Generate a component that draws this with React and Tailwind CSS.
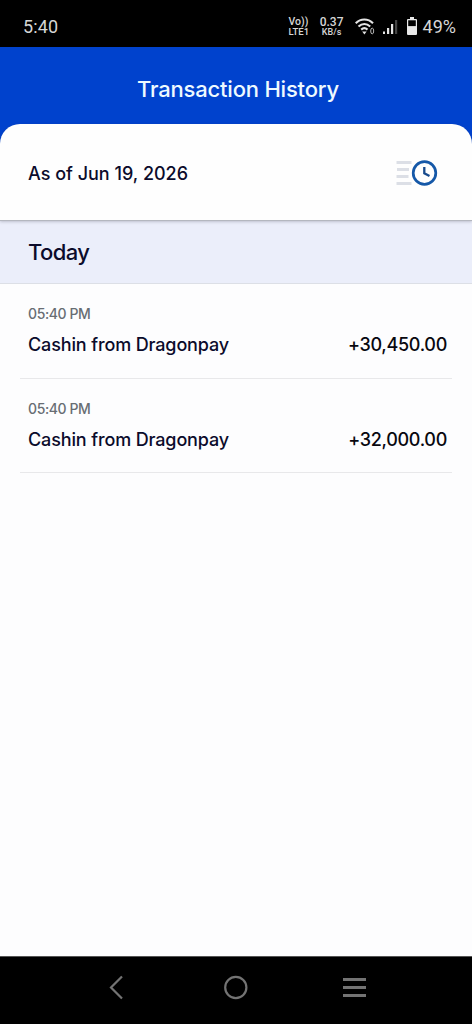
import React from 'react';

const transactions = [
    { id: 1, time: '05:40 PM', title: 'Cashin from Dragonpay', amount: '+30,450.00' },
    { id: 2, time: '05:40 PM', title: 'Cashin from Dragonpay', amount: '+32,000.00' },
];

function StatusBar() {
    return (
        <div className="h-[47px] shrink-0 bg-black text-[#d6d6d6] font-['Roboto',sans-serif] flex items-center pt-[6px] pl-[23px] pr-4">
            <span className="text-[18px] leading-5 tracking-[0.1px]">5:40</span>

            <div className="ml-auto flex items-center">
                <div className="w-[22px] mr-[9px] flex flex-col font-medium leading-[10px] whitespace-nowrap">
                    <span className="text-[10.5px]">Vo))</span>
                    <span className="text-[9.5px]">LTE1</span>
                </div>
                <div className="w-6 mr-[11px] flex flex-col items-center font-medium leading-[10px] whitespace-nowrap">
                    <span className="text-[12px]">0.37</span>
                    <span className="text-[9px]">KB/s</span>
                </div>

                {/* Wifi */}
                <svg className="mr-[8px]" width="20" height="18" viewBox="0 0 20 18" fill="none">
                    <path d="M.7 5.300C5.700 .3 13 .3 18 5.300" stroke="#e4e4e4" strokeWidth="2.100" />
                    <path d="M3.500 8.500C7.100 5.200 11.600 5.200 15.200 8.500" stroke="#e4e4e4" strokeWidth="2.100" />
                    <path d="M6.200 11.600C8 10 10.700 10 12.500 11.600" stroke="#e4e4e4" strokeWidth="2.100" />
                    <path d="M7.200 13.600h4.400L9.400 16.500z" fill="#e4e4e4" />
                    <ellipse cx="17.200" cy="13" rx="1.500" ry="2.900" stroke="#b5b5b5" />
                </svg>

                {/* Signal */}
                <svg className="mr-[9px]" width="15" height="16" viewBox="0 0 15 16">
                    <rect x="0" y="12.500" width="2" height="2.500" fill="#e4e4e4" />
                    <rect x="4" y="9" width="2.200" height="6" fill="#e4e4e4" />
                    <rect x="8" y="5" width="2.200" height="10" fill="#e4e4e4" />
                    <rect x="12" y="1" width="2.200" height="14" fill="#454545" />
                </svg>

                {/* Battery */}
                <svg className="mr-[6px] -mt-[2px]" width="10" height="18" viewBox="0 0 10 18">
                    <path d="M3 0h4v2h2q1 0 1 1v14q0 1-1 1H1q-1 0-1-1V3q0-1 1-1h2z" fill="#e8e8e8" />
                    <rect x="1.200" y="3.300" width="7.600" height="5.800" fill="#000" />
                </svg>
                <span className="text-[18px] leading-5">49%</span>
            </div>
        </div>
    );
}

function HistoryIcon() {
    return (
        <svg className="mt-1" width="42" height="28" viewBox="0 0 42 28" fill="none">
            <path d="M.5 2.500h15M1 9.500h12M.5 16.500h12M.5 23.500h15" stroke="#dcdfe6" strokeWidth="2.800" />
            <circle cx="28.500" cy="13" r="11.300" stroke="#1558a8" strokeWidth="2.700" />
            <path d="M28.300 7v6.300l5.200 2.700" stroke="#16498c" strokeWidth="2.300" />
        </svg>
    );
}

function TransactionRow({ item }) {
    return (
        <div className="mx-5 h-[94.5px] pl-2 pr-[5px] pt-[21px] border-b border-[#e8e8ea]">
            <p className="text-[14px] leading-[18px] font-medium text-[#686d73] tracking-[-0.4px]">{item.time}</p>
            <div className="mt-[10px] flex items-center justify-between text-[18px] leading-6 font-[550]">
                <span className="text-[#0b0b2b] tracking-[-0.13px]">{item.title}</span>
                <span className="text-[#08080f] tracking-[-0.3px]">{item.amount}</span>
            </div>
        </div>
    );
}

function NavBar() {
    return (
        <div className="h-[68px] shrink-0 bg-black border-t border-[#555] pt-[17px] pl-[109px] pr-[105px] flex items-start">
            <svg width="16" height="26" viewBox="0 0 16 26" fill="none">
                <path d="M13 2.500 2 13.500 13 24.500" stroke="#737373" strokeWidth="2.200" />
            </svg>
            <svg className="ml-[98px]" width="26" height="26" viewBox="0 0 26 26" fill="none">
                <circle cx="12.800" cy="13.500" r="10.600" stroke="#737373" strokeWidth="2.200" />
            </svg>
            <svg className="ml-auto" width="26" height="26" viewBox="0 0 26 26" fill="none">
                <path d="M2 5.500h23M2 13.500h23M2 21.500h23" stroke="#737373" strokeWidth="2.800" />
            </svg>
        </div>
    );
}

function App() {
    return (
        <div className="w-full h-screen flex flex-col bg-[#fdfdfe] font-['Inter',sans-serif] overflow-hidden">
            <StatusBar />

            <div className="shrink-0 bg-[#0042cd]">
                <h1 className="h-[77px] pt-[8px] pl-1 flex items-center justify-center text-[22px] font-[550] tracking-[-0.2px] text-[#eefaff]">
                    Transaction History
                </h1>
                <div className="relative h-[97px] rounded-t-[20px] bg-[#fefefe] border-b border-[#b4b7bf] shadow-[0_1px_3px_rgba(60,60,80,0.25)] pl-7 pr-[34px] flex items-center justify-between">
                    <span className="pt-[2px] text-[18px] font-[550] text-[#0b0b2b]">As of Jun 19, 2026</span>
                    <HistoryIcon />
                </div>
            </div>

            <h2 className="h-[63px] shrink-0 bg-[#ebeefa] border-b border-[#dcdfe6] pl-7 pt-px flex items-center text-[22px] font-medium tracking-[-0.6px] text-[#0b0b2b]">
                Today
            </h2>

            <div className="flex-1">
                {transactions.map((item) => (
                    <TransactionRow key={item.id} item={item} />
                ))}
            </div>

            <NavBar />
        </div>
    );
}

export default App;
